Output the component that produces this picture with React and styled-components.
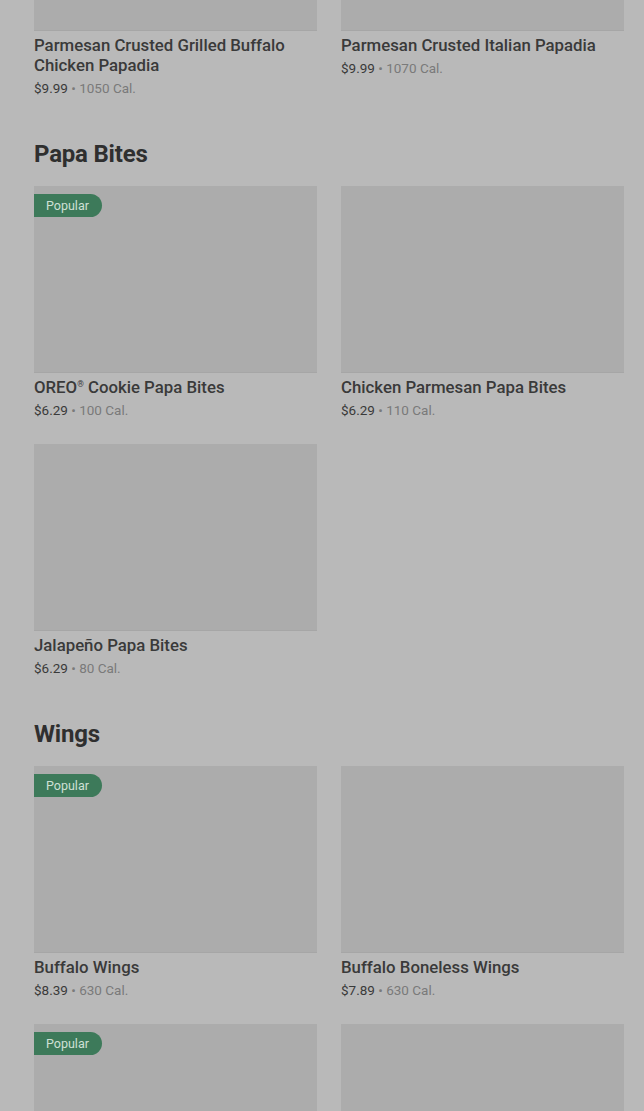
import React from "react";
import styled, { createGlobalStyle } from "styled-components";

const Global = createGlobalStyle`
  html, body { margin: 0; padding: 0; background: #b9b9b9; overflow: hidden; }
  body { font-family: Roboto, "Liberation Sans", sans-serif; }
`;

const Page = styled.div`
  padding: 0 20px 0 34px;
  margin-top: -156px;
  height: 1267px;
  overflow: hidden;
`;

const Section = styled.section`
  & + & { margin-top: 40px; }
`;

const Heading = styled.h2`
  margin: 0 0 16px;
  font-size: 24px;
  line-height: 32px;
  font-weight: 700;
  color: #2f2f2f;
  letter-spacing: -0.2px;
`;

const Grid = styled.div`
  display: grid;
  grid-template-columns: 283px 283px;
  column-gap: 24px;
  row-gap: 24px;
`;

const Card = styled.div`
  display: flex;
  flex-direction: column;
`;

const Thumb = styled.div`
  position: relative;
  height: 187px;
  background: #acacac;
  box-shadow: inset 0 -1px 0 rgba(0,0,0,0.03);
`;

const Badge = styled.span`
  position: absolute;
  top: 8px;
  left: 0;
  height: 23px;
  padding: 0 13px 0 12px;
  display: flex;
  align-items: center;
  background: #3d7a5a;
  color: #cfe0d5;
  font-size: 12.5px;
  border-radius: 0 12px 12px 0;
`;

const Title = styled.div`
  margin-top: 4px;
  font-size: 16.8px;
  line-height: 20px;
  font-weight: 500;
  color: #3a3a3a;
`;

const Reg = styled.span`
  font-size: 0.5em;
  line-height: 0;
  position: relative;
  top: -0.7em;
`;

const Meta = styled.div`
  margin-top: 3px;
  font-size: 13.5px;
  line-height: 20px;
  color: #7a7a7a;
`;

const Price = styled.span`
  color: #3a3a3a;
`;

const sections = [
  {
    title: null,
    items: [
      { name: "Parmesan Crusted Grilled Buffalo Chicken Papadia", price: "$9.99", cal: "1050 Cal." },
      { name: "Parmesan Crusted Italian Papadia", price: "$9.99", cal: "1070 Cal." },
    ],
  },
  {
    title: "Papa Bites",
    items: [
      { name: ["OREO", <Reg key="r">®</Reg>, " Cookie Papa Bites"], id: "oreo", price: "$6.29", cal: "100 Cal.", popular: true },
      { name: "Chicken Parmesan Papa Bites", price: "$6.29", cal: "110 Cal." },
      { name: "Jalapeño Papa Bites", price: "$6.29", cal: "80 Cal." },
    ],
  },
  {
    title: "Wings",
    items: [
      { name: "Buffalo Wings", price: "$8.39", cal: "630 Cal.", popular: true },
      { name: "Buffalo Boneless Wings", price: "$7.89", cal: "630 Cal." },
      { name: "Garlic Parmesan Wings", price: "$8.39", cal: "610 Cal.", popular: true },
      { name: "BBQ Wings", price: "$8.39", cal: "620 Cal." },
    ],
  },
];

export default function App() {
  return (
    <>
      <Global />
      <Page>
        {sections.map((s, i) => (
          <Section key={i}>
            {s.title && <Heading>{s.title}</Heading>}
            <Grid>
              {s.items.map((it) => (
                <Card key={it.id || it.name}>
                  <Thumb>{it.popular && <Badge>Popular</Badge>}</Thumb>
                  <Title>{it.name}</Title>
                  <Meta>
                    <Price>{it.price}</Price> • {it.cal}
                  </Meta>
                </Card>
              ))}
            </Grid>
          </Section>
        ))}
      </Page>
    </>
  );
}
